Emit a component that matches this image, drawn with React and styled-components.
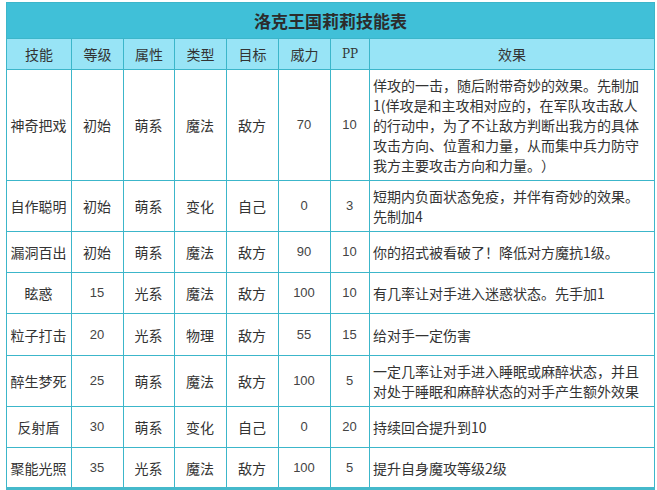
import React from "react";
import styled, { createGlobalStyle } from "styled-components";

const GlobalStyle = createGlobalStyle`
  body {
    margin: 0;
    background: #fff;
    font-family: "Noto Sans CJK SC", "Liberation Sans", sans-serif;
    color: #333;
  }
`;

const Page = styled.div`
  padding: 2px 4px 0 6px;
`;

const Table = styled.table`
  width: 648px;
  table-layout: fixed;
  border-collapse: collapse;
  font-size: 14px;
  line-height: 20px;
  border-bottom: 3px solid #45b9cb;
  text-spacing-trim: space-all;
`;

const TitleCell = styled.th`
  height: 35px;
  padding: 0;
  background: #40c0d8;
  border: 1px solid #3cb6ca;
  font-size: 17px;
  font-weight: bold;
  color: #2c2c2c;
  text-align: center;
`;

const HeadCell = styled.th`
  height: 30px;
  padding: 0;
  background: #98e4f6;
  border: 1px solid #3cb6ca;
  font-weight: normal;
  color: #333;
  text-align: center;
  font-family: ${(p) => (p.$latin ? '"DejaVu Serif", serif' : "inherit")};
  font-size: ${(p) => (p.$latin ? "12px" : "14px")};
`;

const Row = styled.tr`
  height: ${(p) => p.$h}px;
`;

const Cell = styled.td`
  padding: 5px 3px 5px ${(p) => (p.$left ? "3px" : "2px")};
  border: 1px solid #3cb6ca;
  background: #fff;
  text-align: ${(p) => (p.$left ? "left" : "center")};
  vertical-align: middle;
  color: ${(p) => (p.$num ? "#444" : "#333")};
  font-family: ${(p) =>
    p.$num ? '"Liberation Sans", "DejaVu Sans", sans-serif' : "inherit"};
  font-size: ${(p) => (p.$num ? "13px" : "14px")};
  white-space: nowrap;
`;

const widths = [65, 52, 51, 52, 52, 52, 39, 285];
const heads = ["技能", "等级", "属性", "类型", "目标", "威力", "PP", "效果"];

const skills = [
  {
    h: 111,
    name: "神奇把戏",
    lv: "初始",
    attr: "萌系",
    type: "魔法",
    target: "敌方",
    power: "70",
    pp: "10",
    effect: [
      "佯攻的一击，随后附带奇妙的效果。先制加",
      "1(佯攻是和主攻相对应的，在军队攻击敌人",
      "的行动中，为了不让敌方判断出我方的具体",
      "攻击方向、位置和力量，从而集中兵力防守",
      "我方主要攻击方向和力量。）",
    ],
  },
  {
    h: 51,
    name: "自作聪明",
    lv: "初始",
    attr: "萌系",
    type: "变化",
    target: "自己",
    power: "0",
    pp: "3",
    effect: ["短期内负面状态免疫，并伴有奇妙的效果。", "先制加4"],
  },
  {
    h: 41,
    name: "漏洞百出",
    lv: "初始",
    attr: "萌系",
    type: "魔法",
    target: "敌方",
    power: "90",
    pp: "10",
    effect: ["你的招式被看破了！降低对方魔抗1级。"],
  },
  {
    h: 41,
    name: "眩惑",
    lv: "15",
    attr: "光系",
    type: "魔法",
    target: "敌方",
    power: "100",
    pp: "10",
    effect: ["有几率让对手进入迷惑状态。先手加1"],
  },
  {
    h: 42,
    name: "粒子打击",
    lv: "20",
    attr: "光系",
    type: "物理",
    target: "敌方",
    power: "55",
    pp: "15",
    effect: ["给对手一定伤害"],
  },
  {
    h: 51,
    name: "醉生梦死",
    lv: "25",
    attr: "萌系",
    type: "魔法",
    target: "敌方",
    power: "100",
    pp: "5",
    effect: ["一定几率让对手进入睡眠或麻醉状态，并且", "对处于睡眠和麻醉状态的对手产生额外效果"],
  },
  {
    h: 41,
    name: "反射盾",
    lv: "30",
    attr: "萌系",
    type: "变化",
    target: "自己",
    power: "0",
    pp: "20",
    effect: ["持续回合提升到10"],
  },
  {
    h: 41,
    name: "聚能光照",
    lv: "35",
    attr: "光系",
    type: "魔法",
    target: "敌方",
    power: "100",
    pp: "5",
    effect: ["提升自身魔攻等级2级"],
  },
];

const isNum = (v) => /^\d+$/.test(v);

export default function App() {
  return (
    <Page>
      <GlobalStyle />
      <Table>
        <colgroup>
          {widths.map((w, i) => (
            <col key={i} style={{ width: w }} />
          ))}
        </colgroup>
        <thead>
          <tr>
            <TitleCell colSpan={8}>洛克王国莉莉技能表</TitleCell>
          </tr>
          <tr>
            {heads.map((t) => (
              <HeadCell key={t} $latin={t === "PP"}>
                {t}
              </HeadCell>
            ))}
          </tr>
        </thead>
        <tbody>
          {skills.map((s) => (
            <Row key={s.name} $h={s.h}>
              <Cell>{s.name}</Cell>
              <Cell $num={isNum(s.lv)}>{s.lv}</Cell>
              <Cell>{s.attr}</Cell>
              <Cell>{s.type}</Cell>
              <Cell>{s.target}</Cell>
              <Cell $num>{s.power}</Cell>
              <Cell $num>{s.pp}</Cell>
              <Cell $left>
                {s.effect.map((line, i) => (
                  <React.Fragment key={i}>
                    {i > 0 && <br />}
                    {line}
                  </React.Fragment>
                ))}
              </Cell>
            </Row>
          ))}
        </tbody>
      </Table>
    </Page>
  );
}
